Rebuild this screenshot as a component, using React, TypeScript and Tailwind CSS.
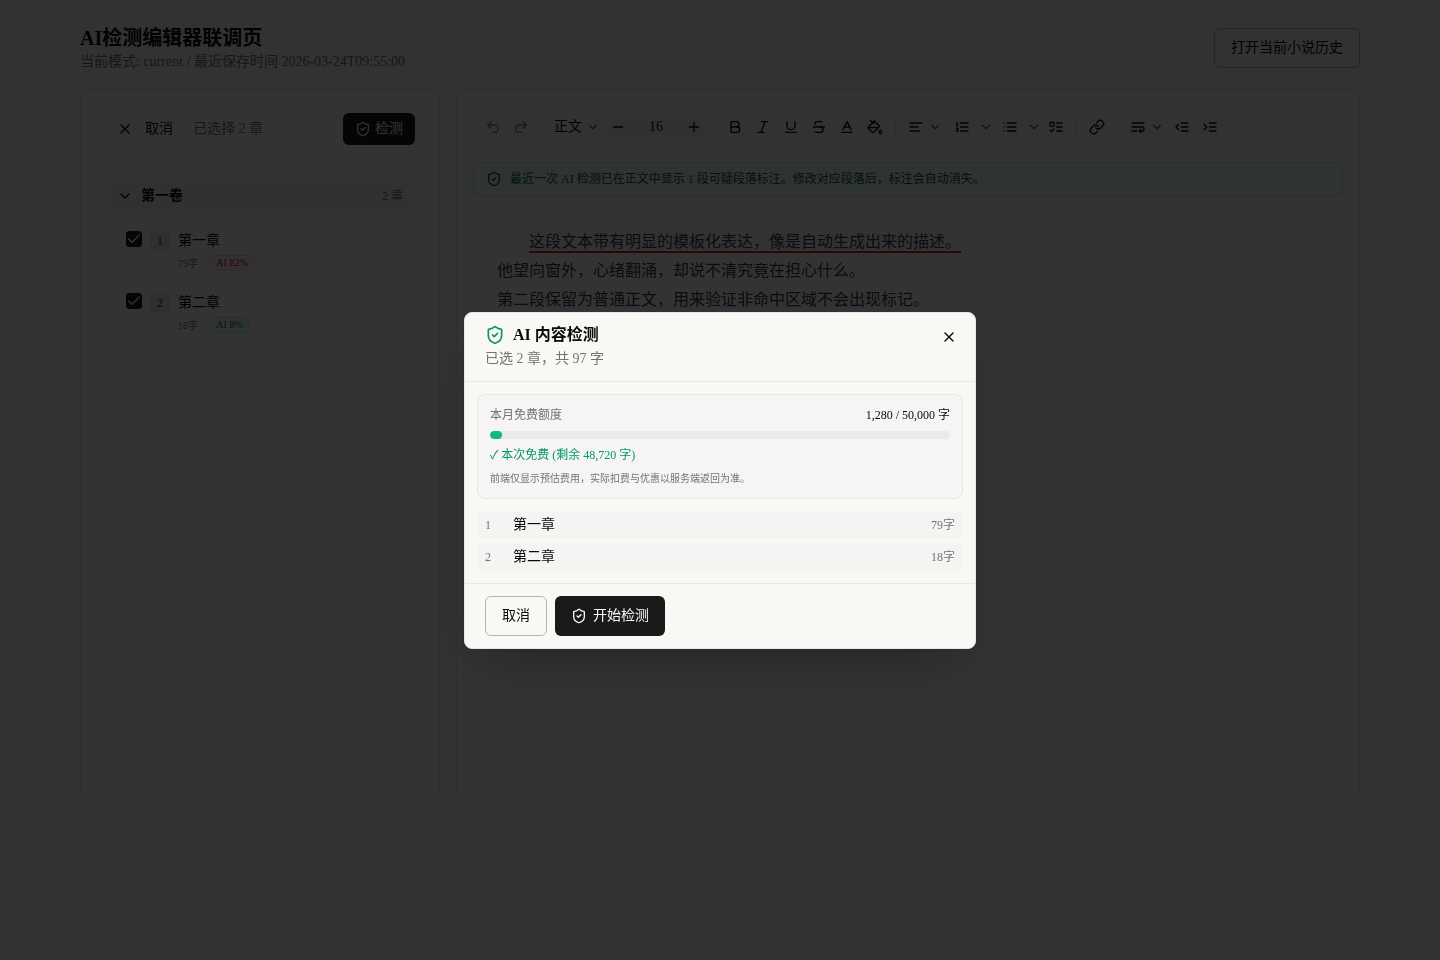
import React, { useState } from 'react';
import {
  Baseline,
  Bold,
  Check,
  ChevronDown,
  Italic,
  Link,
  Minus,
  Plus,
  Redo2,
  ShieldCheck,
  Strikethrough,
  Underline,
  Undo2,
  X,
} from 'lucide-react';

type IconType = React.ComponentType<{ className?: string }>;

interface Chapter {
  id: number;
  title: string;
  words: number;
  aiRate: number;
}

const chapters: Chapter[] = [
  { id: 1, title: '第一章', words: 79, aiRate: 82 },
  { id: 2, title: '第二章', words: 18, aiRate: 8 },
];

const quota = { used: 1280, total: 50000 };

const makeIcon = (paths: string[]): IconType => {
  const Icon = ({ className }: { className?: string }) => (
    <svg
      className={className}
      viewBox="0 0 24 24"
      fill="none"
      stroke="currentColor"
      strokeWidth={2}
      strokeLinecap="round"
      strokeLinejoin="round"
      aria-hidden="true"
    >
      {paths.map((d) => (
        <path key={d} d={d} />
      ))}
    </svg>
  );
  return Icon;
};

const AlignLeftIcon = makeIcon(['M21 6H3', 'M15 12H3', 'M17 18H3']);
const OrderedIcon = makeIcon(['M10 6h11', 'M10 12h11', 'M10 18h11', 'M4 6h1v4', 'M4 10h2', 'M6 18H4c0-1 2-2 2-3s-1-1.5-2-1']);
const BulletIcon = makeIcon(['M8 6h13', 'M8 12h13', 'M8 18h13', 'M3 6h.01', 'M3 12h.01', 'M3 18h.01']);
const TodoIcon = makeIcon([
  'M4 5h4a1 1 0 0 1 1 1v4a1 1 0 0 1-1 1H4a1 1 0 0 1-1-1V6a1 1 0 0 1 1-1Z',
  'm3 17 2 2 4-4',
  'M13 6h8',
  'M13 12h8',
  'M13 18h8',
]);
const WrapIcon = makeIcon(['M3 6h18', 'M3 12h15a3 3 0 1 1 0 6h-4', 'm16 16-2 2 2 2', 'M3 18h7']);
const OutdentIcon = makeIcon(['m7 8-4 4 4 4', 'M21 12H11', 'M21 6H11', 'M21 18H11']);
const IndentIcon = makeIcon(['m3 8 4 4-4 4', 'M21 12H11', 'M21 6H11', 'M21 18H11']);
const BucketIcon = makeIcon([
  'm19 11-8-8-8.6 8.6a2 2 0 0 0 0 2.8l5.2 5.2c.8.8 2 .8 2.8 0L19 11Z',
  'm5 2 5 5',
  'M2 13h15',
  'M22 20a2 2 0 1 1-4 0c0-1.6 1.7-2.4 2-4 .3 1.6 2 2.4 2 4Z',
]);

const Divider = () => <div className="mx-1.5 h-7 w-px bg-gray-200" />;

const ToolButton = ({ icon: Icon, label, disabled }: { icon: IconType; label: string; disabled?: boolean }) => (
  <button
    type="button"
    aria-label={label}
    disabled={disabled}
    className="flex size-7 items-center justify-center rounded disabled:opacity-50"
  >
    <Icon className="size-4" />
  </button>
);

// One button that opens a menu
const MenuButton = ({ icon: Icon, label }: { icon: IconType; label: string }) => (
  <button type="button" aria-label={label} className="flex h-7 items-center gap-1 rounded pr-1 pl-1.5">
    <Icon className="size-4" />
    <ChevronDown className="size-3.5 text-neutral-600" />
  </button>
);

const SplitButton = ({ icon: Icon, label }: { icon: IconType; label: string }) => (
  <div className="flex h-7">
    <button type="button" aria-label={label} className="flex w-8 items-center justify-center">
      <Icon className="size-4" />
    </button>
    <button type="button" aria-label={`${label}样式`} className="flex w-4 items-center justify-center">
      <ChevronDown className="size-3.5 text-neutral-600" />
    </button>
  </div>
);

const Toolbar = () => {
  const [size, setSize] = useState(16);

  return (
    <div className="flex items-center rounded-t-lg border-b border-gray-200 bg-[#faf9f5] px-1.5 py-2">
      <ToolButton icon={Undo2} label="撤销" disabled />
      <ToolButton icon={Redo2} label="重做" disabled />
      <Divider />
      <div className="relative flex h-7 items-center">
        <select aria-label="段落样式" className="h-7 w-14 appearance-none bg-transparent px-1.5 text-sm">
          <option>正文</option>
          <option>标题</option>
        </select>
        <ChevronDown className="pointer-events-none absolute right-1 size-3.5 text-neutral-600" />
      </div>
      <div className="flex h-7 items-center rounded-md bg-[#f4f4f5]">
        <button type="button" aria-label="减小字号" onClick={() => setSize(size - 1)} className="flex size-7 items-center justify-center">
          <Minus className="size-4" />
        </button>
        <input
          aria-label="字号"
          value={size}
          onChange={(e) => setSize(Number(e.target.value) || 0)}
          className="w-12 bg-transparent text-center text-sm"
        />
        <button type="button" aria-label="增大字号" onClick={() => setSize(size + 1)} className="flex size-7 items-center justify-center">
          <Plus className="size-4" />
        </button>
      </div>
      <Divider />
      <ToolButton icon={Bold} label="加粗" />
      <ToolButton icon={Italic} label="斜体" />
      <ToolButton icon={Underline} label="下划线" />
      <ToolButton icon={Strikethrough} label="删除线" />
      <ToolButton icon={Baseline} label="文字颜色" />
      <ToolButton icon={BucketIcon} label="背景颜色" />
      <Divider />
      <MenuButton icon={AlignLeftIcon} label="对齐" />
      <SplitButton icon={OrderedIcon} label="有序列表" />
      <SplitButton icon={BulletIcon} label="无序列表" />
      <ToolButton icon={TodoIcon} label="任务列表" />
      <Divider />
      <ToolButton icon={Link} label="链接" />
      <Divider />
      <MenuButton icon={WrapIcon} label="换行" />
      <ToolButton icon={OutdentIcon} label="减少缩进" />
      <ToolButton icon={IndentIcon} label="增加缩进" />
      <Divider />
    </div>
  );
};

const ChapterItem = ({ chapter }: { chapter: Chapter }) => {
  const badge =
    chapter.aiRate > 50
      ? 'border-rose-200 bg-rose-50 text-rose-700'
      : 'border-emerald-200 bg-emerald-50 text-emerald-700';

  return (
    <li className="flex items-start gap-2 pt-4 pb-1.5 pl-5">
      <span className="grid size-4 place-items-center">
        <input
          id={`chapter-${chapter.id}`}
          type="checkbox"
          defaultChecked
          className="col-start-1 row-start-1 size-4 appearance-none rounded-[3px] border border-[#1a1a1a] checked:bg-[#1a1a1a]"
        />
        <Check className="pointer-events-none col-start-1 row-start-1 size-4 text-white" />
      </span>
      <span className="flex size-5 items-center justify-center rounded bg-[#ececec] text-xs font-semibold text-neutral-500">
        {chapter.id}
      </span>
      <div>
        <label htmlFor={`chapter-${chapter.id}`} className="block text-sm leading-5">
          {chapter.title}
        </label>
        <div className="mt-1 flex items-center gap-1 text-[10px] leading-[15px] text-neutral-500">
          <span>{chapter.words}字</span>
          <span className="text-neutral-400">·</span>
          <span className={`rounded-full border px-1.5 leading-[14px] ${badge}`}>AI {chapter.aiRate}%</span>
        </div>
      </div>
    </li>
  );
};

const Sidebar = () => (
  <aside className="rounded-xl border border-gray-200 bg-white p-3">
    <div className="flex items-center border-b border-gray-200 px-3 pt-3 pb-5">
      <button type="button" className="flex h-8 items-center gap-3 px-3 text-sm">
        <X className="size-4" />
        取消
      </button>
      <span className="ml-2 text-sm text-neutral-500">已选择 2 章</span>
      <button type="button" className="ml-auto flex h-8 items-center gap-1 rounded-md bg-[#1a1a1a] px-3 text-sm text-[#faf9f5]">
        <ShieldCheck className="size-4" />
        检测
      </button>
    </div>
    <div className="p-3">
      <button type="button" className="flex h-9 w-full items-center gap-2 rounded-lg bg-[#f4f4f4] px-3 text-sm">
        <ChevronDown className="size-4" />
        <span className="font-bold">第一卷</span>
        <span className="ml-auto text-xs text-neutral-500">2 章</span>
      </button>
      <ul className="px-px pt-px">
        {chapters.map((chapter) => (
          <ChapterItem key={chapter.id} chapter={chapter} />
        ))}
      </ul>
    </div>
  </aside>
);

const Editor = () => (
  <main className="min-w-0 rounded-xl border border-gray-200 bg-white p-4">
    <Toolbar />
    <div className="mt-3 flex items-center gap-2 rounded-lg border border-emerald-200 bg-emerald-50 px-3 py-2 text-xs text-emerald-800">
      <ShieldCheck className="size-4" />
      最近一次 AI 检测已在正文中显示 1 段可疑段落标注。修改对应段落后，标注会自动消失。
    </div>
    <div className="px-6 pt-[31px] pb-8 text-base leading-[29px] text-slate-700">
      <p className="indent-8">
        <span className="border-b-2 border-[#dc2626] bg-[#dc2626]/5 pb-px">这段文本带有明显的模板化表达，像是自动生成出来的描述。</span>
      </p>
      <p>他望向窗外，心绪翻涌，却说不清究竟在担心什么。</p>
      <p>第二段保留为普通正文，用来验证非命中区域不会出现标记。</p>
    </div>
  </main>
);

const DetectDialog = () => (
  <div
    role="dialog"
    aria-modal="true"
    aria-labelledby="detect-title"
    className="relative w-full max-w-lg rounded-lg border border-gray-200 bg-[#f9f8f4] shadow-2xl"
  >
    <div className="space-y-1 border-b border-gray-200 px-5 py-3">
      <h2 id="detect-title" className="flex items-center gap-2 text-base leading-5 font-bold">
        <ShieldCheck className="size-5 text-[#059669]" />
        AI 内容检测
      </h2>
      <p className="text-sm text-neutral-500">已选 2 章，共 97 字</p>
    </div>
    <button type="button" aria-label="关闭" className="absolute top-4 right-[18px]">
      <X className="size-4" />
    </button>

    <div className="space-y-3 p-3">
      <div className="space-y-2 rounded-lg border border-gray-200 bg-[#f6f5f4] p-3 text-xs">
        <div className="flex justify-between">
          <span className="text-neutral-500">本月免费额度</span>
          <span>
            {quota.used.toLocaleString('en-US')} / {quota.total.toLocaleString('en-US')} 字
          </span>
        </div>
        <div className="h-2 overflow-hidden rounded-full bg-[#eaeaea]">
          <div className="h-full rounded-full bg-[#10b981]" style={{ width: `${(quota.used / quota.total) * 100}%` }} />
        </div>
        <p className="text-[#059669]">✓ 本次免费 (剩余 {(quota.total - quota.used).toLocaleString('en-US')} 字)</p>
        <p className="text-[10px] leading-[15px] text-neutral-500">前端仅显示预估费用，实际扣费与优惠以服务端返回为准。</p>
      </div>
      <ul className="space-y-1">
        {chapters.map((chapter) => (
          <li key={chapter.id} className="flex h-7 items-center gap-2 rounded bg-[#f5f4f2] px-2">
            <span className="w-5 text-xs text-neutral-500">{chapter.id}</span>
            <span className="text-sm">{chapter.title}</span>
            <span className="ml-auto text-xs text-neutral-500">{chapter.words}字</span>
          </li>
        ))}
      </ul>
    </div>

    <div className="flex gap-2 border-t border-gray-200 px-5 py-3 text-sm">
      <button type="button" className="h-10 rounded-md border border-[#b4b4b4] px-4">
        取消
      </button>
      <button type="button" className="flex h-10 items-center gap-1.5 rounded-md bg-[#1a1a1a] px-4 text-[#faf9f5]">
        <ShieldCheck className="size-4" />
        开始检测
      </button>
    </div>
  </div>
);

const App = () => (
  <div className="min-h-screen bg-[#faf9f5] font-['Liberation_Serif','Noto_Sans_CJK_SC',serif] text-[#0a0a0a]">
    <div className="mx-auto max-w-7xl py-6">
      <header className="mb-4 flex items-center justify-between">
        <div>
          <h1 className="text-xl font-bold">AI检测编辑器联调页</h1>
          <p className="text-sm text-neutral-500">当前模式: current / 最近保存时间 2026-03-24T09:55:00</p>
        </div>
        <button type="button" className="h-10 rounded-md border border-[#b4b4b4] px-4 text-sm">
          打开当前小说历史
        </button>
      </header>
      <div className="grid min-h-[calc(100vh-247px)] grid-cols-[360px_1fr] gap-4">
        <Sidebar />
        <Editor />
      </div>
    </div>

    <div className="fixed inset-0 flex items-center justify-center bg-black/80">
      <DetectDialog />
    </div>
  </div>
);

export default App;
